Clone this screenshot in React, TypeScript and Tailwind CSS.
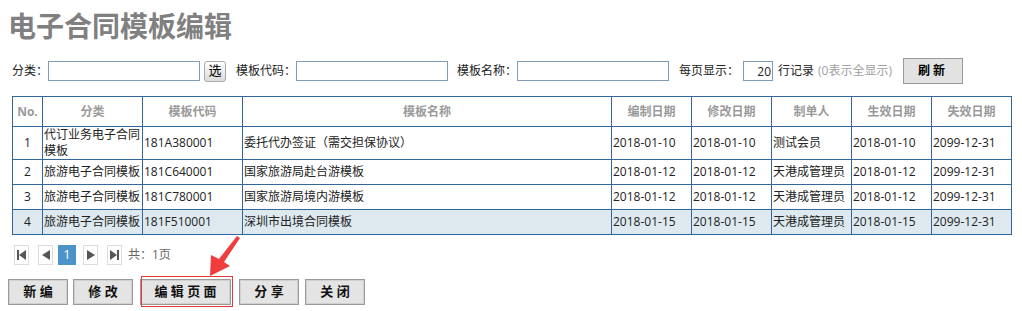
import React from 'react';

const FONT = { fontFamily: '"Open Sans", "Noto Sans CJK SC", sans-serif' };

type Row = {
  no: number;
  category: string;
  code: string;
  name: string;
  created: string;
  modified: string;
  owner: string;
  start: string;
  end: string;
};

const rows: Row[] = [
  {
    no: 1,
    category: '代订业务电子合同模板',
    code: '181A380001',
    name: '委托代办签证（需交担保协议）',
    created: '2018-01-10',
    modified: '2018-01-10',
    owner: '测试会员',
    start: '2018-01-10',
    end: '2099-12-31',
  },
  {
    no: 2,
    category: '旅游电子合同模板',
    code: '181C640001',
    name: '国家旅游局赴台游模板',
    created: '2018-01-12',
    modified: '2018-01-12',
    owner: '天港成管理员',
    start: '2018-01-12',
    end: '2099-12-31',
  },
  {
    no: 3,
    category: '旅游电子合同模板',
    code: '181C780001',
    name: '国家旅游局境内游模板',
    created: '2018-01-12',
    modified: '2018-01-12',
    owner: '天港成管理员',
    start: '2018-01-12',
    end: '2099-12-31',
  },
  {
    no: 4,
    category: '旅游电子合同模板',
    code: '181F510001',
    name: '深圳市出境合同模板',
    created: '2018-01-15',
    modified: '2018-01-15',
    owner: '天港成管理员',
    start: '2018-01-15',
    end: '2099-12-31',
  },
];

const headers = ['No.', '分类', '模板代码', '模板名称', '编制日期', '修改日期', '制单人', '生效日期', '失效日期'];
const widths = [30, 100, 100, 369, 80, 80, 80, 80, 80];

function PagerBox({ children }: { children: React.ReactNode }) {
  return (
    <div className="flex h-[20px] w-[15px] items-center justify-center border border-[#dcdcdc] bg-white">
      {children}
    </div>
  );
}

function ActionButton({ label, className }: { label: string; className: string }) {
  return (
    <button
      className={`flex h-[26px] items-center justify-center border border-[#9a9a9a] bg-[#e4e4e4] text-[13px] font-bold text-[#111] shadow-[inset_0_0_0_1px_#d0d0d0] ${className}`}
    >
      {label}
    </button>
  );
}

export default function App() {
  return (
    <div className="relative h-[311px] w-[1022px] bg-white text-[12px] text-[#222]" style={FONT}>
      <div className="h-[50px] pl-[8px] pt-[9px] text-[28px] font-bold leading-[34px] text-[#808080]">
        电子合同模板编辑
      </div>

      <div className="mt-[8px] flex h-[26px] items-center pl-[12px]">
        <span>分类：</span>
        <input className="h-[20px] w-[152px] border border-[#7f9db9] outline-none" />
        <button className="ml-[4px] flex h-[21px] w-[22px] items-center justify-center rounded-[3px] border border-[#a9a9a9] bg-gradient-to-b from-white to-[#dcdcdc] text-[13px] text-black">
          选
        </button>
        <span className="ml-[10px]">模板代码：</span>
        <input className="h-[20px] w-[152px] border border-[#7f9db9] outline-none" />
        <span className="ml-[9px]">模板名称：</span>
        <input className="h-[20px] w-[152px] border border-[#7f9db9] outline-none" />
        <span className="ml-[10px]">每页显示：</span>
        <input
          defaultValue="20"
          className="ml-[4px] h-[20px] w-[30px] border border-[#7f9db9] pr-[1px] text-right text-[12px] outline-none"
        />
        <span className="ml-[5px]">行记录</span>
        <span className="ml-[4px] text-[#a0a0a0]">(0表示全显示)</span>
        <button className="ml-[11px] flex h-[26px] w-[60px] items-center justify-center border border-[#9a9a9a] bg-[#e2e2e2] text-[12px] font-bold tracking-[3px] text-black">
          刷新
        </button>
      </div>

      <table className="ml-[12px] mt-[12px] w-[1000px] table-fixed border-collapse">
        <colgroup>
          {widths.map((w, i) => (
            <col key={i} style={{ width: w }} />
          ))}
        </colgroup>
        <thead>
          <tr className="h-[30px]">
            {headers.map((h) => (
              <th key={h} className="border border-[#336699] text-center font-bold text-[#9a9a9a]">
                {h}
              </th>
            ))}
          </tr>
        </thead>
        <tbody>
          {rows.map((r) => (
            <tr
              key={r.no}
              className={`${r.no === 1 ? 'h-[32px]' : 'h-[25px]'} ${r.no === 4 ? 'bg-[#dde9ef]' : ''}`}
            >
              <td className="border border-[#336699] text-center leading-[16px]">{r.no}</td>
              <td className="border border-[#336699] px-px leading-[16px]">{r.category}</td>
              <td className="border border-[#336699] px-px leading-[16px]">{r.code}</td>
              <td className="border border-[#336699] px-px leading-[16px]">{r.name}</td>
              <td className="border border-[#336699] px-px leading-[16px]">{r.created}</td>
              <td className="border border-[#336699] px-px leading-[16px]">{r.modified}</td>
              <td className="border border-[#336699] px-px leading-[16px]">{r.owner}</td>
              <td className="border border-[#336699] px-px leading-[16px]">{r.start}</td>
              <td className="border border-[#336699] px-px leading-[16px]">{r.end}</td>
            </tr>
          ))}
        </tbody>
      </table>

      <div className="mt-[10px] flex h-[20px] items-center pl-[14px] text-[#666]">
        <PagerBox>
          <svg width="9" height="10" viewBox="0 0 9 10">
            <rect x="0" y="0" width="2" height="10" fill="#555" />
            <polygon points="9,0 9,10 2,5" fill="#555" />
          </svg>
        </PagerBox>
        <div className="ml-[9px]">
          <PagerBox>
            <svg width="8" height="10" viewBox="0 0 8 10">
              <polygon points="8,0 8,10 0,5" fill="#555" />
            </svg>
          </PagerBox>
        </div>
        <div className="ml-[5px] flex h-[20px] w-[18px] items-center justify-center bg-[#4a94c9] text-[13px] text-white">
          1
        </div>
        <div className="ml-[7px]">
          <PagerBox>
            <svg width="8" height="10" viewBox="0 0 8 10">
              <polygon points="0,0 0,10 8,5" fill="#555" />
            </svg>
          </PagerBox>
        </div>
        <div className="ml-[9px]">
          <PagerBox>
            <svg width="9" height="10" viewBox="0 0 9 10">
              <polygon points="0,0 0,10 7,5" fill="#555" />
              <rect x="7" y="0" width="2" height="10" fill="#555" />
            </svg>
          </PagerBox>
        </div>
        <span className="ml-[6px] text-[12px]">共：1页</span>
      </div>

      <div className="mt-[14px] flex items-center pl-[8px]">
        <ActionButton label="新 编" className="w-[60px]" />
        <ActionButton label="修 改" className="ml-[5px] w-[60px]" />
        <ActionButton label="编 辑 页 面" className="ml-[7px] w-[91px]" />
        <ActionButton label="分 享" className="ml-[8px] w-[60px]" />
        <ActionButton label="关 闭" className="ml-[6px] w-[60px]" />
      </div>

      {/* annotation overlay */}
      <div className="pointer-events-none absolute left-[141px] top-[276px] h-[31px] w-[92px] border border-[#e23a3a]" />
      <svg className="pointer-events-none absolute left-0 top-0" width="1022" height="311">
        <polygon
          points="237,236 240,238 224,262 230,266 210,276 211,255 219,259"
          fill="#f03c3c"
        />
      </svg>
    </div>
  );
}
